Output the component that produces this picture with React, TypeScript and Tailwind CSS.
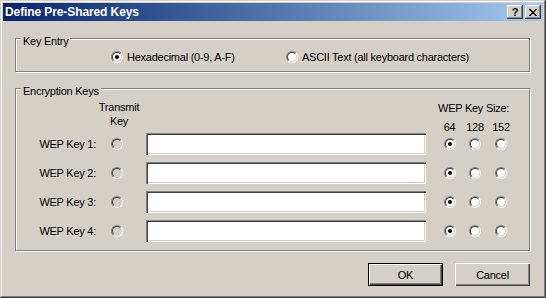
import React from "react";

function Radio({ checked = false, disabled = false }: { checked?: boolean; disabled?: boolean }) {
  return (
    <span className="relative inline-block w-[12px] h-[12px] shrink-0 rounded-full border border-t-[#808080] border-l-[#808080] border-r-white border-b-white">
      <span
        className={
          disabled
            ? "block w-full h-full rounded-full border border-t-[#404040] border-l-[#404040] border-r-[#d4d0c8] border-b-[#d4d0c8] bg-[#d4d0c8]"
            : "block w-full h-full rounded-full border border-t-[#404040] border-l-[#404040] border-r-[#d4d0c8] border-b-[#d4d0c8] bg-white"
        }
      />
      {checked && <span className="absolute left-[3px] top-[3px] w-[4px] h-[4px] rounded-full bg-black" />}
    </span>
  );
}

function CaptionButton({ children }: { children: React.ReactNode }) {
  return (
    <div className="w-[16px] h-[14px] bg-[#d4d0c8] flex items-center justify-center shadow-[inset_-1px_-1px_#404040,inset_1px_1px_#fff,inset_-2px_-2px_#808080,inset_2px_2px_#d4d0c8]">
      {children}
    </div>
  );
}

function Field() {
  return (
    <div className="ml-[23px] w-[280px] h-[22px] bg-white shadow-[inset_1px_1px_#808080,inset_2px_2px_#404040,inset_-1px_-1px_#fff,inset_-2px_-2px_#d4d0c8]" />
  );
}

function KeyRow({ n }: { n: number }) {
  return (
    <div className="flex items-center h-[22px]">
      <div className="w-[80px] text-right">WEP Key {n}:</div>
      <div className="ml-[15px] flex">
        <Radio disabled />
      </div>
      <Field />
      <div className="ml-[11px] flex">
        <div className="w-[25px] pl-[7px] flex">
          <Radio checked />
        </div>
        <div className="w-[26px] pl-[7px] flex">
          <Radio />
        </div>
        <div className="w-[26px] pl-[7px] flex">
          <Radio />
        </div>
      </div>
    </div>
  );
}

export default function App() {
  return (
    <div className="w-[546px] h-[298px] p-[3px] bg-[#d4d0c8] flex flex-col text-black text-[11px] leading-[14px] tracking-[-0.25px] font-['Liberation_Sans',Arial,sans-serif] shadow-[inset_-1px_-1px_#404040,inset_1px_1px_#d4d0c8,inset_-2px_-2px_#808080,inset_2px_2px_#fff]">
      {/* Title bar */}
      <div className="h-[18px] shrink-0 bg-linear-to-r from-[#0a246a] to-[#a6caf0] flex items-center pl-[2px] pr-[2px]">
        <span className="text-white font-bold text-[12px] tracking-[-0.1px] leading-[18px]">Define Pre-Shared Keys</span>
        <div className="ml-auto flex gap-[2px]">
          <CaptionButton>
            <span className="font-bold text-[11px] leading-[11px] tracking-normal">?</span>
          </CaptionButton>
          <CaptionButton>
            <svg width="8" height="7" viewBox="0 0 8 7" shapeRendering="crispEdges">
              <path
                fill="#000"
                d="M0 0h2v1h-2z M6 0h2v1h-2z M1 1h2v1h-2z M5 1h2v1h-2z M2 2h4v1h-4z M3 3h2v1h-2z M2 4h4v1h-4z M1 5h2v1h-2z M5 5h2v1h-2z M0 6h2v1h-2z M6 6h2v1h-2z"
              />
            </svg>
          </CaptionButton>
        </div>
      </div>

      {/* Content */}
      <div className="pl-[12px] pt-[17px] flex flex-col">
        {/* Key Entry group */}
        <div className="relative w-[515px] h-[34px] border border-[#808080] shadow-[1px_1px_0_#fff,inset_1px_1px_0_#fff] pt-[11px] pl-[95px] flex items-start">
          <span className="absolute left-[5px] top-[-5px] px-[2px] bg-[#d4d0c8]">Key Entry</span>
          <div className="w-[175px] flex items-center h-[14px]">
            <Radio checked />
            <span className="ml-[4px]">Hexadecimal (0-9, A-F)</span>
          </div>
          <div className="flex items-center h-[14px]">
            <Radio />
            <span className="ml-[4px]">ASCII Text (all keyboard characters)</span>
          </div>
        </div>

        {/* Encryption Keys group */}
        <div className="relative mt-[16px] w-[515px] h-[163px] border border-[#808080] shadow-[1px_1px_0_#fff,inset_1px_1px_0_#fff] flex flex-col">
          <span className="absolute left-[5px] top-[-5px] px-[2px] bg-[#d4d0c8]">Encryption Keys</span>
          <div className="h-[44px] flex items-start">
            <div className="w-[84px]" />
            <div className="w-[38px] pt-[11px] text-center flex flex-col items-center">
              <span>Transmit</span>
              <span>Key</span>
            </div>
            <div className="w-[299px]" />
            <div className="w-[77px] pt-[12px] flex flex-col">
              <span className="pl-[1px] whitespace-nowrap">WEP Key Size:</span>
              <div className="mt-[5px] flex">
                <span className="w-[25px] text-center">64</span>
                <span className="w-[26px] text-center">128</span>
                <span className="w-[26px] text-center">152</span>
              </div>
            </div>
          </div>
          <div className="flex flex-col gap-[7px]">
            <KeyRow n={1} />
            <KeyRow n={2} />
            <KeyRow n={3} />
            <KeyRow n={4} />
          </div>
        </div>

        {/* Buttons */}
        <div className="mt-[12px] w-[515px] flex justify-end gap-[12px]">
          <button className="w-[75px] h-[23px] border border-black bg-[#d4d0c8] flex items-center justify-center shadow-[inset_1px_1px_#fff,inset_-1px_-1px_#404040,inset_-2px_-2px_#808080]">
            OK
          </button>
          <button className="w-[75px] h-[23px] bg-[#d4d0c8] flex items-center justify-center shadow-[inset_1px_1px_#fff,inset_-1px_-1px_#404040,inset_-2px_-2px_#808080]">
            Cancel
          </button>
        </div>
      </div>
    </div>
  );
}
